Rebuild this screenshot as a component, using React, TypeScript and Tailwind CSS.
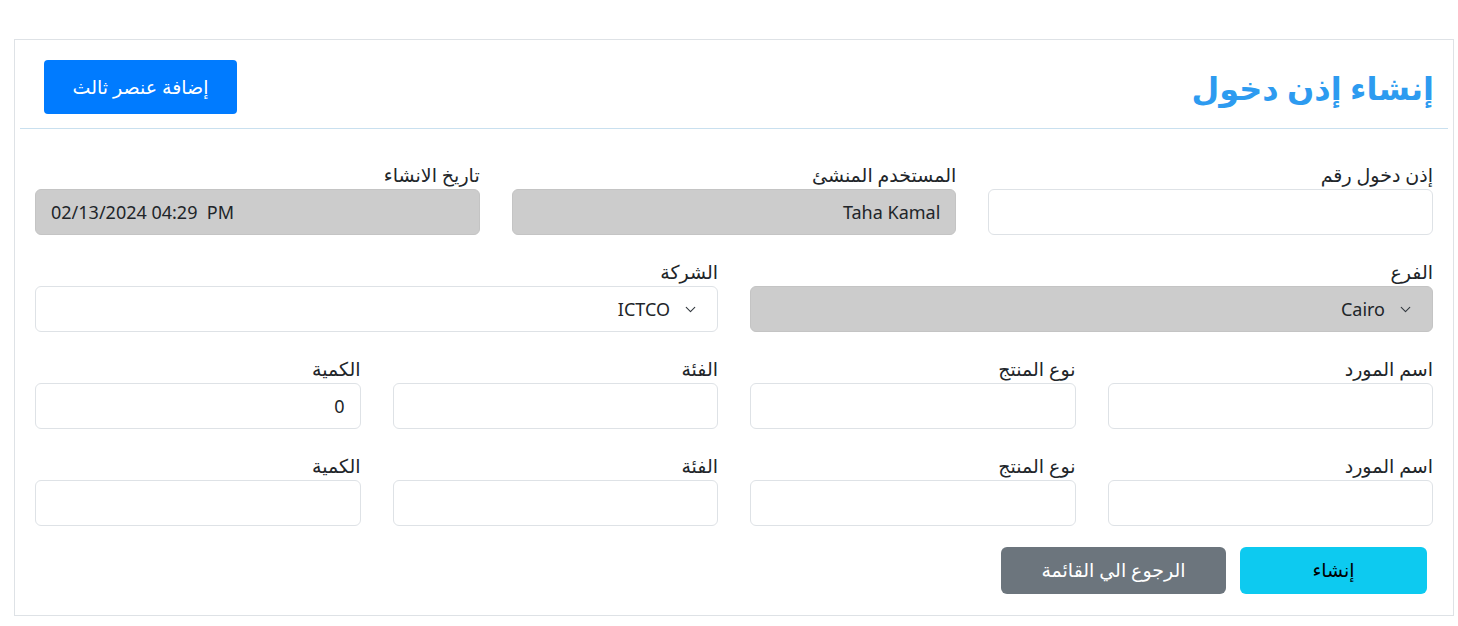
import { ChevronDown } from "lucide-react";

const font = { fontFamily: '"Noto Sans", "DejaVu Sans", sans-serif' };

type FieldProps = {
  label: string;
  value?: string;
  readOnly?: boolean;
  ltr?: boolean;
};

const Field = ({ label, value = "", readOnly, ltr }: FieldProps) => {
  return (
    <div className="flex flex-col">
      <label className="block h-[24px] text-[19px] leading-[24px] text-[#212529] mb-[2px]">
        {label}
      </label>
      <div
        dir={ltr ? "ltr" : "rtl"}
        className={`h-[46px] rounded-[6px] border px-[15px] flex items-center whitespace-pre text-[18px] text-[#212529] ${
          readOnly ? "bg-[#cccccc] border-[#c4c4c4]" : "bg-white border-[#dee2e6]"
        }`}
      >
        {value}
      </div>
    </div>
  );
};

const SelectField = ({ label, value, readOnly }: FieldProps) => {
  return (
    <div className="flex flex-col">
      <label className="block h-[24px] text-[19px] leading-[24px] text-[#212529] mb-[2px]">
        {label}
      </label>
      <div
        className={`h-[46px] rounded-[6px] border pr-[18px] flex items-center gap-[12px] text-[18px] text-[#212529] ${
          readOnly ? "bg-[#cccccc] border-[#c4c4c4]" : "bg-white border-[#dee2e6]"
        }`}
      >
        <ChevronDown size={17} strokeWidth={1.6} className="text-[#343a40]" />
        <span>{value}</span>
      </div>
    </div>
  );
};

export default function App() {
  return (
    <div className="min-h-screen bg-white pt-[39px]" style={font}>
      <div
        dir="rtl"
        className="ml-[14px] w-[1440px] border border-[#dee2e6] bg-white"
      >
        {/* header */}
        <div className="mx-[5px] flex h-[89px] items-start justify-between border-b border-[#c9e0ef] pt-[20px] pl-[24px] pr-[14px]">
          <h1 className="text-[32px] font-semibold leading-[56px] text-[#2d9bf0]">
            إنشاء إذن دخول
          </h1>
          <button className="h-[54px] w-[193px] rounded-[4px] bg-[#007bff] text-[19px] text-white">
            إضافة عنصر ثالث
          </button>
        </div>

        {/* form */}
        <div className="px-[20px] pt-[34px] pb-[21px]">
          <div className="grid grid-cols-3 gap-x-[32px]">
            <Field label="إذن دخول رقم" />
            <Field label="المستخدم المنشئ" value="Taha Kamal" readOnly />
            <Field label="تاريخ الانشاء" value="02/13/2024 04:29  PM" readOnly ltr />
          </div>

          <div className="mt-[25px] grid grid-cols-2 gap-x-[32px]">
            <SelectField label="الفرع" value="Cairo" readOnly />
            <SelectField label="الشركة" value="ICTCO" />
          </div>

          <div className="mt-[25px] grid grid-cols-4 gap-x-[32px]">
            <Field label="اسم المورد" />
            <Field label="نوع المنتج" />
            <Field label="الفئة" />
            <Field label="الكمية" value="0" />
          </div>

          <div className="mt-[25px] grid grid-cols-4 gap-x-[32px]">
            <Field label="اسم المورد" />
            <Field label="نوع المنتج" />
            <Field label="الفئة" />
            <Field label="الكمية" />
          </div>

          <div className="mt-[21px] flex gap-[14px] pr-[6px]">
            <button className="h-[47px] w-[187px] rounded-[6px] bg-[#0dcaf0] text-[19px] text-black">
              إنشاء
            </button>
            <button className="h-[47px] w-[225px] rounded-[6px] bg-[#6c757d] text-[19px] text-white">
              الرجوع الي القائمة
            </button>
          </div>
        </div>
      </div>
    </div>
  );
}
